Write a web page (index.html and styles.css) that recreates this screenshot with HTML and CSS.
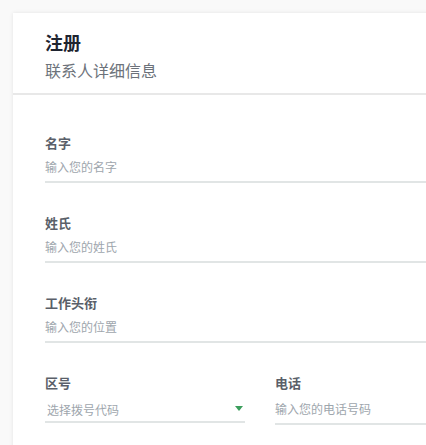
FILE: index.html
```html
<!DOCTYPE html>
<html lang="zh">
<head>
<meta charset="utf-8">
<title>注册</title>
<link rel="stylesheet" href="styles.css">
</head>
<body>
<div class="page">
  <div class="card">
    <div class="card-header">
      <h1 class="title">注册</h1>
      <p class="subtitle">联系人详细信息</p>
    </div>
    <form class="card-body">
      <div class="field">
        <label class="label">名字</label>
        <input class="input" type="text" placeholder="输入您的名字">
      </div>
      <div class="field">
        <label class="label">姓氏</label>
        <input class="input" type="text" placeholder="输入您的姓氏">
      </div>
      <div class="field">
        <label class="label">工作头衔</label>
        <input class="input" type="text" placeholder="输入您的位置">
      </div>
      <div class="row">
        <div class="field col">
          <label class="label">区号</label>
          <div class="select">
            <span class="select-text">选择拨号代码</span>
            <span class="caret"></span>
          </div>
        </div>
        <div class="field col">
          <label class="label">电话</label>
          <input class="input input-tall" type="text" placeholder="输入您的电话号码">
        </div>
      </div>
    </form>
  </div>
</div>
</body>
</html>
```

FILE: styles.css
```css
html, body {
  margin: 0;
  padding: 0;
  overflow: hidden;
  background: #f9f9f9;
  font-family: "Noto Sans CJK SC", "Noto Sans", sans-serif;
}

.page {
  width: 100vw;
  height: 100vh;
  overflow: hidden;
  padding: 13px 0 0 13px;
  box-sizing: border-box;
}

.card {
  width: 494px;
  background: #ffffff;
  box-shadow: 0 0 4px rgba(0, 0, 0, 0.09);
}

.card-header {
  padding: 17px 32px 11px;
  border-bottom: 2px solid #e8e8e8;
}

.title {
  margin: 0;
  font-size: 18px;
  line-height: 24px;
  font-weight: 700;
  color: #1e2430;
}

.subtitle {
  margin: 4px 0 0;
  font-size: 16px;
  line-height: 24px;
  color: #6c727a;
}

.card-body {
  display: flex;
  flex-direction: column;
  gap: 31px;
  padding: 39px 32px 40px;
}

.field {
  display: flex;
  flex-direction: column;
}

.label {
  font-size: 13px;
  line-height: 18px;
  font-weight: 700;
  color: #5a5f69;
}

.input {
  height: 31px;
  box-sizing: border-box;
  margin: 0;
  padding: 0;
  border: 0;
  border-bottom: 2px solid #e1e5e5;
  outline: none;
  background: transparent;
  font-family: inherit;
  font-size: 12px;
  color: #333;
}

.input-tall {
  height: 33px;
  padding-top: 1px;
}

.input::placeholder {
  color: #9ea6ad;
}

.row {
  display: grid;
  grid-template-columns: 200px 200px;
  gap: 30px;
}

.select {
  height: 31px;
  box-sizing: border-box;
  display: flex;
  align-items: center;
  justify-content: space-between;
  padding: 7px 2px 0 2px;
  border-bottom: 2px solid #e1e5e5;
}

.select-text {
  font-size: 12px;
  line-height: 16px;
  color: #9ea6ad;
}

.caret {
  width: 0;
  height: 0;
  border-left: 4px solid transparent;
  border-right: 4px solid transparent;
  border-top: 5px solid #3b9e5c;
  margin-top: -3px;
}
```
